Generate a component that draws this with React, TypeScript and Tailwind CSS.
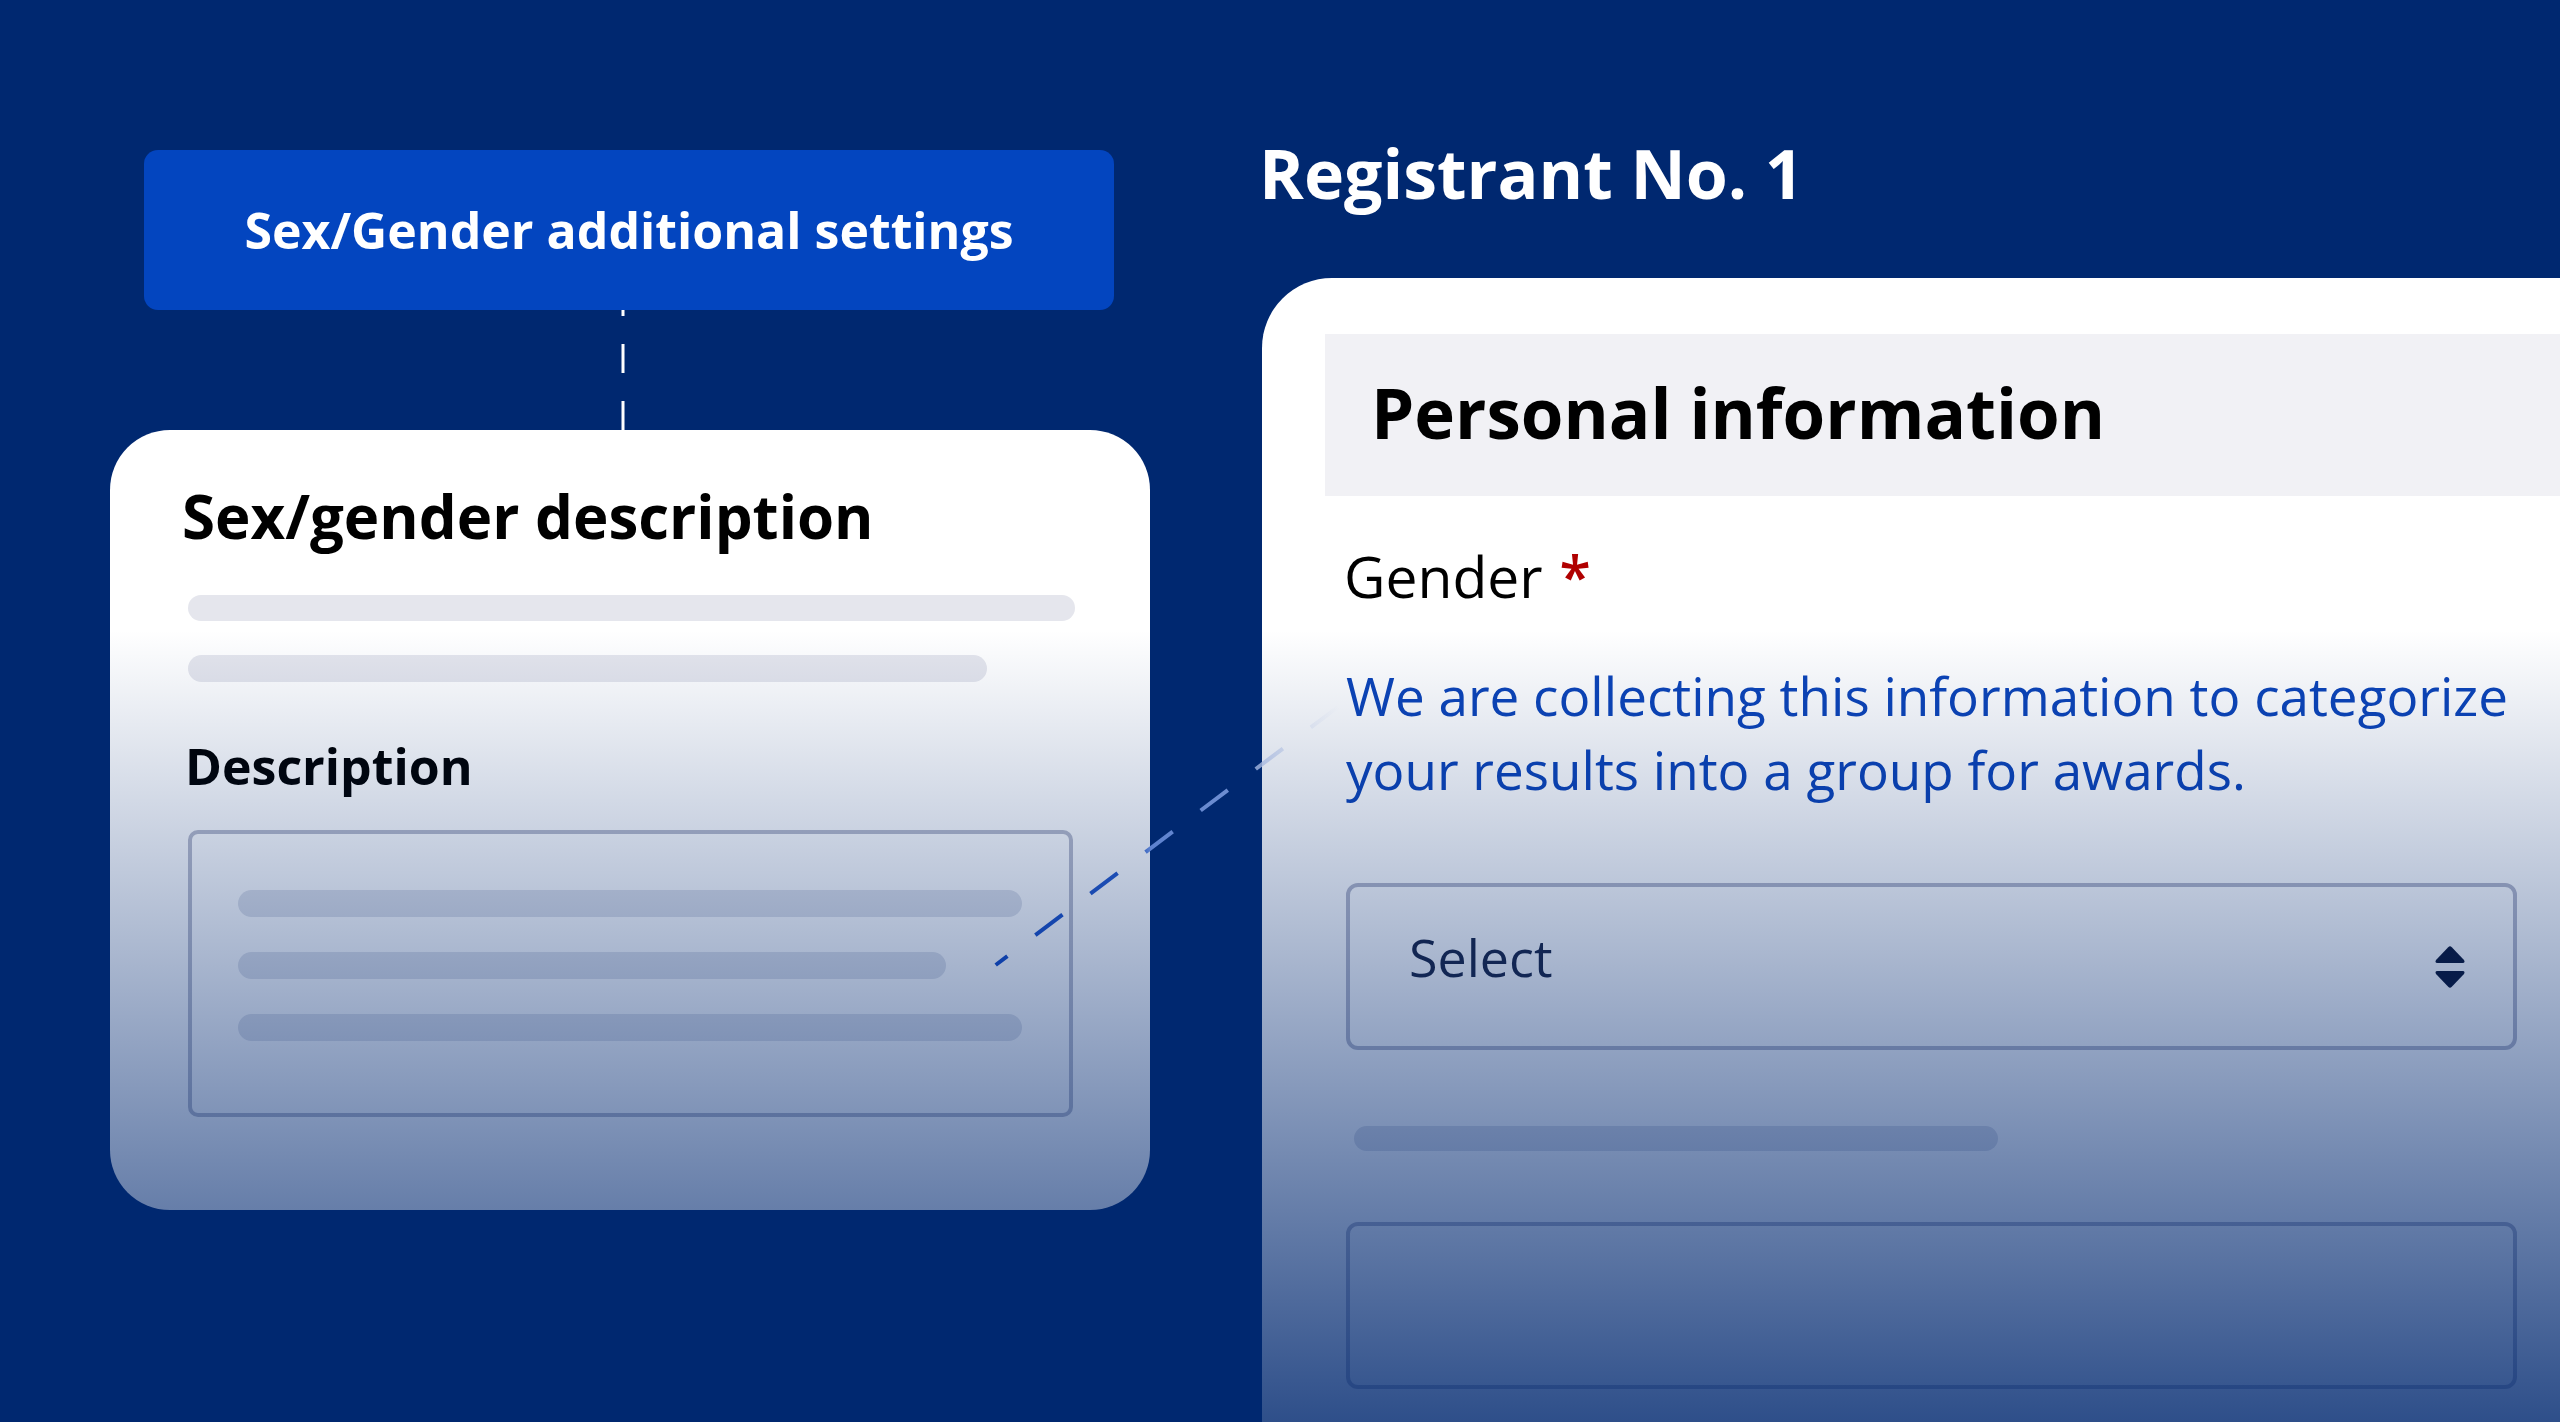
import React from "react";

function UpDownIcon() {
  return (
    <svg width="32" height="42" viewBox="0 0 32 42" className="shrink-0">
      <path d="M14.2 1.2 Q16 -0.6 17.8 1.2 L30 14 Q31.5 17 28.5 17 L3.5 17 Q0.5 17 2 14 Z" fill="#0b1533" />
      <path d="M14.2 40.8 Q16 42.6 17.8 40.8 L30 28 Q31.5 25 28.5 25 L3.5 25 Q0.5 25 2 28 Z" fill="#0b1533" />
    </svg>
  );
}

export default function App() {
  return (
    <div className="relative w-[2560px] h-[1422px] overflow-hidden bg-[#002870] flex font-['Open_Sans',sans-serif]">
      {/* Left column */}
      <div className="w-[1040px] ml-[110px] pt-[150px] flex flex-col shrink-0">
        <div className="ml-[34px] w-[970px] h-[160px] rounded-[14px] bg-[#0345bf] flex items-center justify-center text-white text-[50px] font-bold leading-none">
          Sex/Gender additional settings
        </div>
        <div className="h-[120px] pl-[511px]">
          <svg width="4" height="120" viewBox="0 0 4 120">
            <line x1="2" y1="120" x2="2" y2="0" stroke="#ffffff" strokeWidth="3" strokeDasharray="29 28" />
          </svg>
        </div>
        <div className="h-[780px] rounded-[60px] bg-white pt-[56px] pl-[72px] flex flex-col">
          <h2 className="text-[60px] font-bold leading-[60px] text-black">Sex/gender description</h2>
          <div className="mt-[49px] ml-[6px] w-[887px] h-[26px] rounded-full bg-[#e5e6ed]" />
          <div className="mt-[34px] ml-[6px] w-[799px] h-[27px] rounded-full bg-[#e5e6ed]" />
          <div className="mt-[59px] ml-[3px] text-[50px] font-bold leading-[50px] text-black">Description</div>
          <div className="mt-[39px] ml-[6px] w-[885px] h-[287px] rounded-[10px] border-[4px] border-[#b9bccc] pt-[56px] pl-[46px] flex flex-col gap-[35px]">
            <div className="w-[784px] h-[27px] rounded-full bg-[#dfe2ea]" />
            <div className="w-[708px] h-[27px] rounded-full bg-[#dfe2ea]" />
            <div className="w-[784px] h-[27px] rounded-full bg-[#dfe2ea]" />
          </div>
        </div>
      </div>

      {/* Right column */}
      <div className="ml-[112px] flex-1 flex flex-col">
        <h1 className="mt-[139px] -ml-[3px] text-white text-[68px] font-bold leading-[68px]">Registrant No. 1</h1>
        <div className="mt-[71px] flex-1 bg-white rounded-tl-[70px] pt-[56px] flex flex-col">
          <div className="ml-[63px] h-[162px] bg-[#f1f1f5] pt-[44px] pl-[46px]">
            <div className="text-[69px] font-bold leading-[69px] text-black">Personal information</div>
          </div>
          <div className="pl-[84px] pr-[43px] flex flex-col">
            <div className="mt-[52px] -ml-[2px] text-[57px] leading-[56px] text-black">
              Gender<span className="ml-[17px] text-[#b00000] font-semibold">*</span>
            </div>
            <p className="mt-[55px] text-[53px] leading-[74px] text-[#0c44b8] whitespace-nowrap">
              We are collecting this information to categorize
              <br />
              your results into a group for awards.
            </p>
            <div className="mt-[76px] h-[167px] rounded-[12px] border-[4px] border-[#b5b8ca] flex items-center justify-between pl-[59px] pr-[47px]">
              <span className="text-[52px] leading-[52px] text-[#1b2544] pb-[20px]">Select</span>
              <UpDownIcon />
            </div>
            <div className="mt-[76px] ml-[8px] w-[644px] h-[25px] rounded-full bg-[#dcdfe8]" />
            <div className="mt-[71px] h-[167px] rounded-[12px] border-[4px] border-[#b5b8ca]" />
          </div>
        </div>
      </div>

      {/* Fade overlay */}
      <div className="pointer-events-none absolute inset-0 bg-[linear-gradient(180deg,rgba(0,40,112,0)_630px,rgba(0,40,112,0.82)_1422px)]" />

      {/* Diagonal connector */}
      <svg className="pointer-events-none absolute inset-0" width="2560" height="1422" viewBox="0 0 2560 1422">
        <defs>
          <linearGradient id="dg" gradientUnits="userSpaceOnUse" x1="995" y1="0" x2="1340" y2="0">
            <stop offset="0" stopColor="#0e3fa8" stopOpacity="1" />
            <stop offset="0.42" stopColor="#2050b6" stopOpacity="1" />
            <stop offset="0.45" stopColor="#5d82cf" stopOpacity="1" />
            <stop offset="0.68" stopColor="#7393d6" stopOpacity="0.95" />
            <stop offset="0.78" stopColor="#a9badf" stopOpacity="0.8" />
            <stop offset="1" stopColor="#c8d2ea" stopOpacity="0" />
          </linearGradient>
        </defs>
        <line x1="1338" y1="707" x2="995.7" y2="965" stroke="url(#dg)" strokeWidth="4" strokeDasharray="34 35" />
      </svg>
    </div>
  );
}
